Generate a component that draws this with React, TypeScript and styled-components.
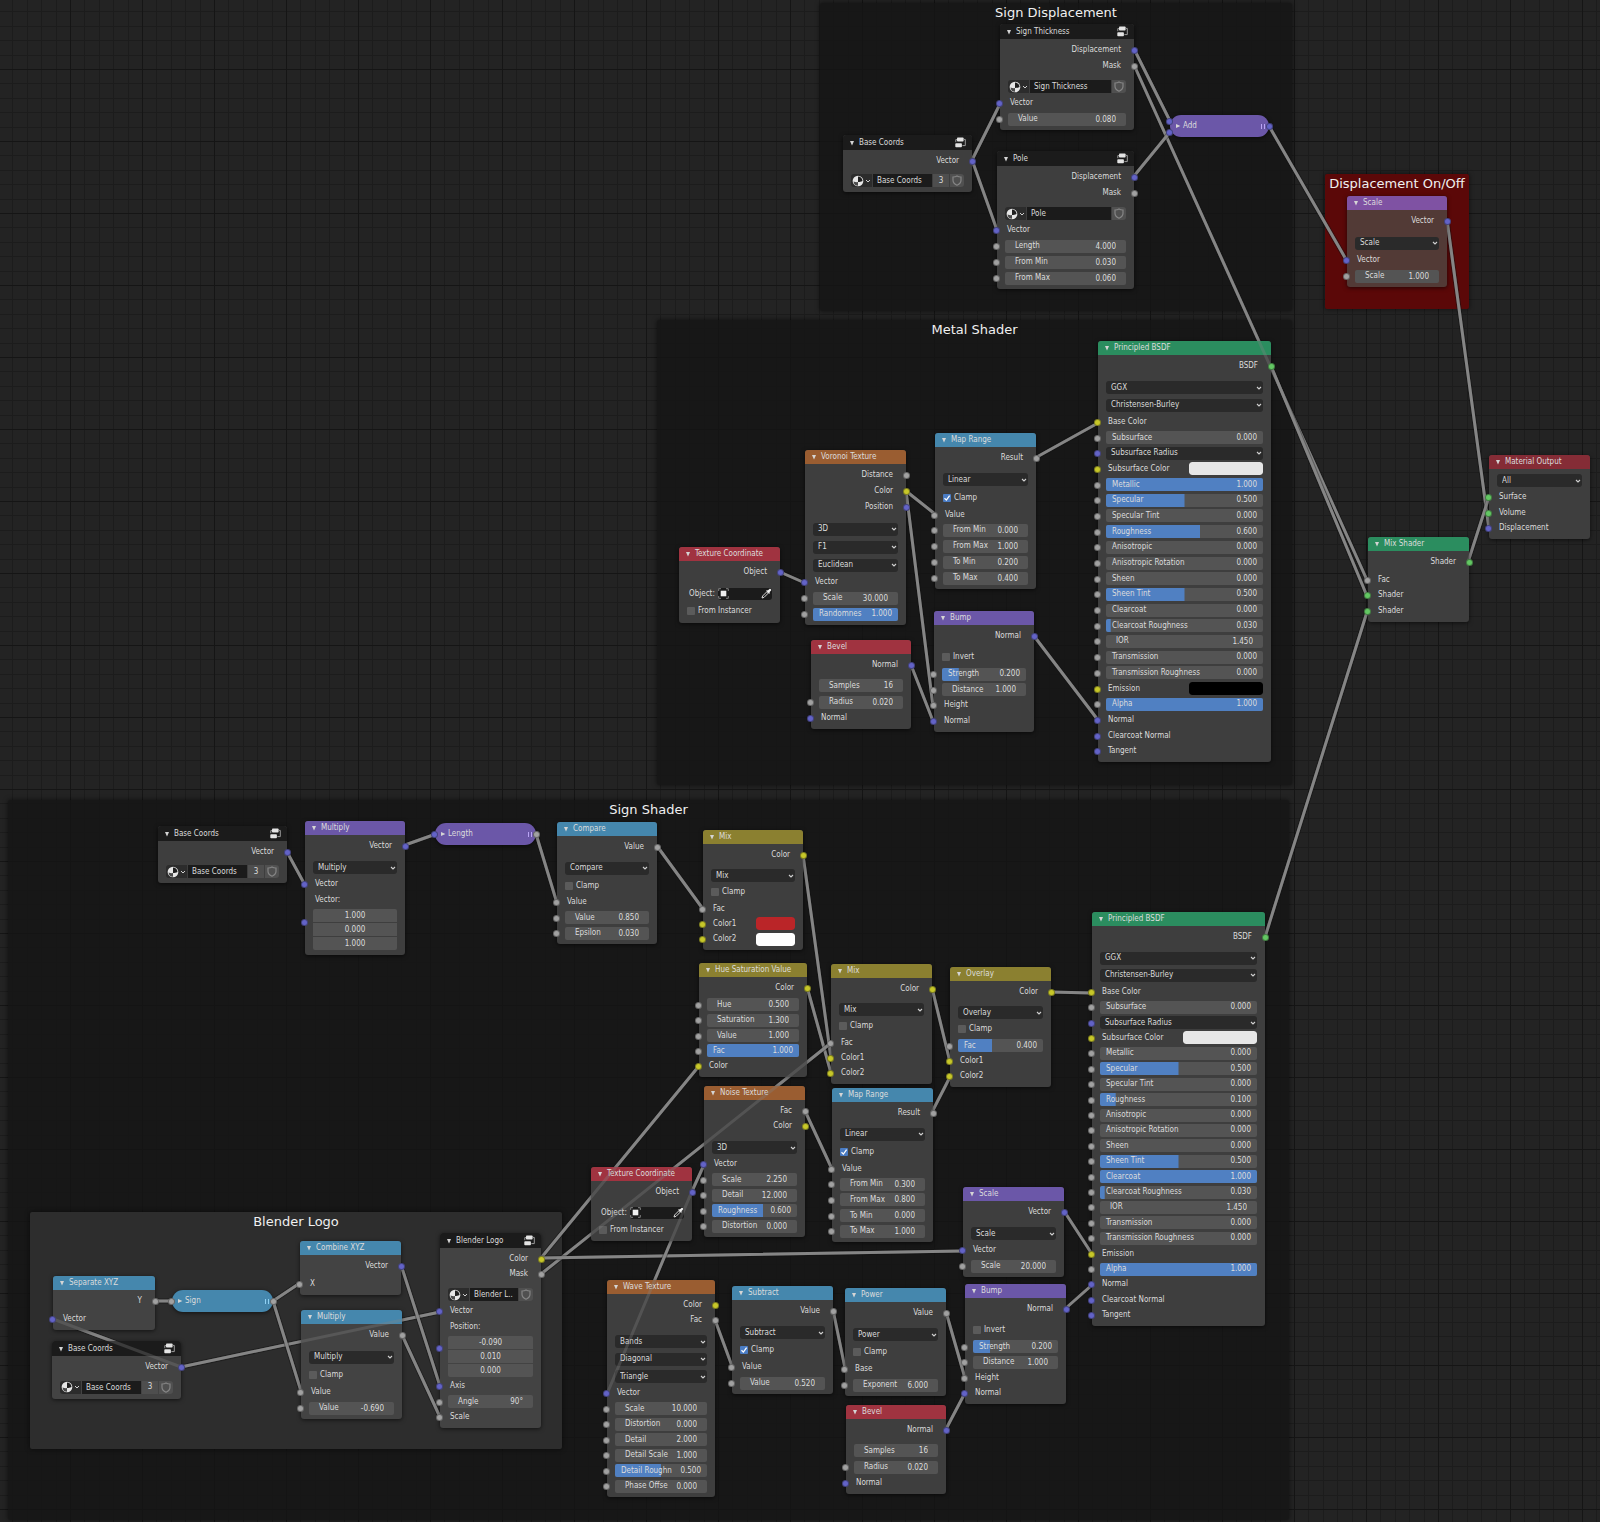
import React from 'react';
import styled, { createGlobalStyle, css } from 'styled-components';

/* ---------- theme ---------- */

const socketColor = {
  vector: '#6363c7',
  value: '#a1a1a1',
  color: '#c7c729',
  shader: '#63c763',
};

const headerColor = {
  group: '#1b1b1b',
  vector: '#6b57a8',
  vectorHot: '#7f52a3',
  shader: '#2b8d5f',
  converter: '#4587ad',
  texture: '#9a5d31',
  input: '#a03340',
  output: '#852c36',
  color: '#8b8030',
};

type SocketKind = keyof typeof socketColor;
type HeaderKind = keyof typeof headerColor;

const GlobalStyle = createGlobalStyle`
  *, *::before, *::after { box-sizing: border-box; }
  body {
    margin: 0;
    background: #232323;
    color: #dcdcdc;
    font-family: "DejaVu Sans Condensed", "DejaVu Sans", sans-serif;
    font-size: 8px;
    line-height: 12px;
  }
  button, input, select {
    margin: 0;
    padding: 0;
    border: 0;
    background: none;
    color: inherit;
    font: inherit;
    outline-offset: -1px;
  }
`;

/* ---------- canvas ---------- */

const Canvas = styled.main`
  position: relative;
  min-height: 100vh;
  overflow: hidden;
  background: #232323;
`;

const Layer = styled.svg<{ $above?: boolean }>`
  position: absolute;
  inset: 0;
  width: 100%;
  height: 100%;
  pointer-events: none;
  ${p => p.$above && css`
    z-index: 2;
    opacity: 0.3;
  `}
`;

const Frame = styled.section<{ $x: number; $y: number; $w: number; $h: number; $tone: 'dark' | 'red' | 'grey' }>`
  position: absolute;
  left: ${p => p.$x}px;
  top: ${p => p.$y}px;
  width: ${p => p.$w}px;
  height: ${p => p.$h}px;
  border-radius: 2px;
  background: ${p => ({ dark: 'rgba(21, 21, 21, 0.82)', red: '#5b0808', grey: '#2d2d2d' })[p.$tone]};
  box-shadow: 0 0 5px rgba(0, 0, 0, 0.6);
`;

const FrameTitle = styled.h2`
  margin: 0;
  color: #f0f0f0;
  font-family: "DejaVu Sans", sans-serif;
  font-size: 13px;
  font-weight: 400;
  line-height: 20px;
  text-align: center;
  white-space: nowrap;
`;

/* ---------- node shell ---------- */

const NodeBox = styled.article<{ $x: number; $y: number; $w: number; $h: number; $tone: 'plain' | 'light' | 'red' }>`
  position: absolute;
  left: ${p => p.$x}px;
  top: ${p => p.$y}px;
  width: ${p => p.$w}px;
  height: ${p => p.$h}px;
  display: flex;
  flex-direction: column;
  border-radius: 3px;
  background: ${p => ({ plain: '#3e3e3e', light: '#434343', red: '#523a36' })[p.$tone]};
  box-shadow: 0 1px 4px rgba(0, 0, 0, 0.6);
`;

const Header = styled.header<{ $kind: HeaderKind }>`
  flex: none;
  display: flex;
  align-items: center;
  gap: 3px;
  height: ${p => (p.$kind === 'group' ? 15 : 14)}px;
  padding: 0 6px 0 5px;
  border-radius: 3px 3px 0 0;
  background: ${p => headerColor[p.$kind]};
`;

const Toggle = styled.button`
  display: flex;
  align-items: center;
  justify-content: center;
  width: 8px;
  height: 12px;
`;

const NodeTitle = styled.h3`
  flex: 1;
  margin: 0;
  font-size: 8px;
  font-weight: 400;
  line-height: 12px;
  white-space: nowrap;
`;

const Body = styled.div`
  flex: 1;
  min-height: 0;
  display: flex;
  flex-direction: column;
  padding: 3px 0;
`;

const Row = styled.div<{ $size: number; $end?: boolean }>`
  flex: 1 1 ${p => p.$size}px;
  min-height: 0;
  position: relative;
  display: flex;
  align-items: center;
  justify-content: ${p => (p.$end ? 'flex-end' : 'flex-start')};
  padding: 0 8px;
  white-space: nowrap;
`;

const Gap = styled.div<{ $size: number }>`
  flex: none;
  height: ${p => p.$size}px;
`;

const PortLabel = styled.span<{ $out?: boolean }>`
  padding: ${p => (p.$out ? '0 5px 0 0' : '0 0 0 2px')};
`;

const Socket = styled.i<{ $kind: SocketKind; $right?: boolean }>`
  position: absolute;
  z-index: 3;
  top: calc(50% - 3px);
  ${p => (p.$right ? 'right: -4px;' : 'left: -4px;')}
  width: 7px;
  height: 7px;
  border: 1px solid rgba(20, 20, 20, 0.4);
  border-radius: 50%;
  background: ${p => socketColor[p.$kind]};
`;

/* ---------- controls ---------- */

const NumberBox = styled.label`
  flex: 1;
  display: flex;
  align-items: center;
  justify-content: space-between;
  height: 13px;
  padding: 0 10px;
  border-radius: 2px;
  background: #545454;
`;

const NumberInput = styled.input`
  flex: 1;
  min-width: 0;
  width: 0;
  height: 13px;
  text-align: right;
`;

const SliderBox = styled.label`
  flex: 1;
  display: grid;
  grid-template-columns: 1fr auto;
  align-items: center;
  height: 13px;
  overflow: hidden;
  border-radius: 2px;
  background: #545454;
`;

const SliderInput = styled.input`
  grid-area: 1 / 1 / 2 / 3;
  width: 100%;
  height: 13px;
  appearance: none;
  background: linear-gradient(#5080c2, #5080c2) no-repeat left / var(--fill) 100%;
  &::-webkit-slider-thumb { appearance: none; width: 1px; height: 13px; }
`;

const SliderName = styled.span`
  grid-area: 1 / 1 / 2 / 2;
  padding-left: 6px;
  pointer-events: none;
`;

const SliderValue = styled.output`
  grid-area: 1 / 2 / 2 / 3;
  padding-right: 6px;
  pointer-events: none;
`;

const SelectBox = styled.div`
  flex: 1;
  display: grid;
  align-items: center;
  height: 13px;
  border-radius: 3px;
  background: #2a2a2a;
`;

const Select = styled.select`
  grid-area: 1 / 1;
  width: 100%;
  height: 13px;
  padding: 0 12px 0 5px;
  appearance: none;
`;

const SelectArrow = styled.svg`
  grid-area: 1 / 1;
  justify-self: end;
  width: 6px;
  height: 4px;
  margin-right: 1px;
  pointer-events: none;
`;

const CheckLabel = styled.label`
  display: flex;
  align-items: center;
  gap: 3px;
`;

const CheckWrap = styled.span`
  display: grid;
`;

const CheckInput = styled.input`
  grid-area: 1 / 1;
  width: 8px;
  height: 8px;
  appearance: none;
  border-radius: 1px;
  background: #5b5b5b;
  &:checked { background: #4a7cc4; }
`;

const CheckMark = styled.svg`
  grid-area: 1 / 1;
  width: 8px;
  height: 8px;
  pointer-events: none;
`;

const SwatchLabel = styled.label`
  flex: 1;
  display: flex;
  align-items: center;
  justify-content: space-between;
  padding-left: 2px;
`;

const SwatchInput = styled.input`
  width: 48%;
  height: 13px;
  appearance: none;
  overflow: hidden;
  border-radius: 3px;
  &::-webkit-color-swatch-wrapper { padding: 0; }
  &::-webkit-color-swatch { border: 0; border-radius: 3px; }
`;

const VectorGroup = styled.div`
  flex: 1 1 60px;
  min-height: 0;
  position: relative;
  display: flex;
  flex-direction: column;
`;

const VectorStack = styled.div`
  flex: 1;
  display: flex;
  flex-direction: column;
  gap: 1px;
`;

const VectorInput = styled.input`
  width: 100%;
  height: 13px;
  background: #545454;
  text-align: center;
  &:first-child { border-radius: 2px 2px 0 0; }
  &:last-child { border-radius: 0 0 2px 2px; }
`;

const DataBlock = styled.div`
  flex: 1;
  display: flex;
  gap: 1px;
  height: 13px;
  overflow: hidden;
  border-radius: 3px;
`;

const BrowseButton = styled.button`
  display: flex;
  align-items: center;
  gap: 1px;
  width: 21px;
  padding: 0 1px;
  background: #2c2c2c;
`;

const NameInput = styled.input`
  flex: 1;
  min-width: 0;
  height: 13px;
  padding: 0 4px;
  background: #1b1b1b;
`;

const UsersButton = styled.button`
  width: 16px;
  height: 13px;
  background: #4e4e4e;
  text-align: center;
`;

const ShieldButton = styled.button`
  display: flex;
  align-items: center;
  justify-content: center;
  width: 14px;
  background: #505050;
`;

const ObjectLabel = styled.span`
  width: 31px;
  padding-left: 2px;
`;

const ObjectField = styled.div`
  flex: 1;
  display: flex;
  align-items: center;
  justify-content: space-between;
  height: 12px;
  border-radius: 3px;
  background: #1b1b1b;
`;

const IconButton = styled.button`
  display: flex;
  align-items: center;
`;

/* ---------- collapsed node ---------- */

const Pill = styled.article<{ $x: number; $y: number; $w: number; $kind: HeaderKind }>`
  position: absolute;
  left: ${p => p.$x}px;
  top: ${p => p.$y}px;
  width: ${p => p.$w}px;
  height: 22px;
  display: flex;
  align-items: center;
  gap: 1px;
  padding: 0 4px;
  border-radius: 11px;
  background: ${p => headerColor[p.$kind]};
  box-shadow: 0 1px 4px rgba(0, 0, 0, 0.6);
`;

const PillPorts = styled.div<{ $right?: boolean }>`
  position: absolute;
  ${p => (p.$right ? 'right: 0;' : 'left: 0;')}
  top: 0;
  width: 0;
  height: 100%;
  display: flex;
  flex-direction: column;
  justify-content: center;
`;

const PillPort = styled.div`
  position: relative;
  height: 11px;
`;

const Grip = styled.span<{ $kind: HeaderKind }>`
  width: 4px;
  height: 5px;
  border: solid ${p => (p.$kind === 'converter' ? '#8fd0f2' : '#b9a4f4')};
  border-width: 0 1px;
`;

/* ---------- icons ---------- */

const DownTriangle = () => (
  <svg width="6" height="6" viewBox="0 0 6 6"><path d="M1 1h4L3 5.4z" fill="#d5d5d5" /></svg>
);

const RightTriangle = () => (
  <svg width="6" height="6" viewBox="0 0 6 6"><path d="M1 1l4.4 2L1 5z" fill="#d5d5d5" /></svg>
);

const Chevron = () => (
  <SelectArrow viewBox="0 0 6 4" aria-hidden="true">
    <path d="M1 1l2 2 2-2" fill="none" stroke="#d0d0d0" strokeWidth="1.1" />
  </SelectArrow>
);

const GroupIcon = () => (
  <svg width="11" height="11" viewBox="0 0 11 11" aria-hidden="true">
    <rect x="2" y="0.5" width="6.6" height="4" rx="0.8" fill="#e4e4e4" />
    <rect x="0.3" y="6.3" width="6.6" height="4" rx="0.8" fill="#e4e4e4" />
    <path d="M8.8 2.4h1.500v6.200H7.400M2 2.6H0.8v2.6" fill="none" stroke="#a8a8a8" strokeWidth="0.9" />
  </svg>
);

const SphereIcon = () => (
  <svg width="12" height="12" viewBox="0 0 11 11" aria-hidden="true">
    <circle cx="5.5" cy="5.5" r="4.9" fill="#e6e6e6" />
    <path d="M5.5 1.400a4.100 4.100 0 0 1 4.100 4.100c-1.300.7-2.700.9-4.100.9z" fill="#1e1e1e" />
    <path d="M1.400 5.900c1.300.6 2.700.7 4.100.6v3.400A4.400 4.400 0 0 1 1.400 5.900z" fill="#4a4a4a" />
  </svg>
);

const SmallChevron = () => (
  <svg width="6" height="4" viewBox="0 0 6 4" aria-hidden="true">
    <path d="M1 1l2 2 2-2" fill="none" stroke="#d0d0d0" strokeWidth="1" />
  </svg>
);

const ShieldIcon = () => (
  <svg width="10" height="11" viewBox="0 0 10 11" aria-hidden="true">
    <path d="M5 1c1.300.8 2.600 1 4 1v3.200C9 7.600 7.200 9.200 5 10.200 2.800 9.200 1 7.600 1 5.200V2c1.400 0 2.700-.2 4-1z" fill="none" stroke="#858585" strokeWidth="1.2" />
  </svg>
);

const ObjectIcon = () => (
  <svg width="11" height="11" viewBox="0 0 11 11" aria-hidden="true">
    <rect x="2.700" y="2.700" width="5.600" height="5.600" fill="#f0f0f0" />
    <path d="M0.700 3V.7H3M8 .7h2.300V3M10.300 8v2.300H8M3 10.300H.7V8" fill="none" stroke="#8c8c8c" strokeWidth="0.9" />
  </svg>
);

const DropperIcon = () => (
  <svg width="11" height="11" viewBox="0 0 11 11" aria-hidden="true">
    <path d="M1 10l.6-2L6 3.600 7.400 5 3 9.400z" fill="none" stroke="#d8d8d8" strokeWidth="1" />
    <path d="M5.200 2.800l3 3 .8-.8-.6-.7 1.700-1.800c.7-.8-.7-2.300-1.600-1.600L6.700 2.600 6 2z" fill="#f0f0f0" />
  </svg>
);

/* ---------- row model ---------- */

type RowSpec =
  | { t: 'out'; k: SocketKind; n: string }
  | { t: 'in'; k: SocketKind; n: string }
  | { t: 'num'; k?: SocketKind; n: string; v: string; tall?: boolean }
  | { t: 'slide'; k: SocketKind; n: string; v: string }
  | { t: 'sel'; n: string; k?: SocketKind }
  | { t: 'check'; n: string; on?: boolean; size?: number }
  | { t: 'swatch'; k: SocketKind; n: string; c: string }
  | { t: 'vec'; n: string; v: string[] }
  | { t: 'id'; n: string; users?: string }
  | { t: 'object' }
  | { t: 'gap'; h: number };

const out = (k: SocketKind, n: string): RowSpec => ({ t: 'out', k, n });
const inp = (k: SocketKind, n: string): RowSpec => ({ t: 'in', k, n });
const num = (n: string, v: string): RowSpec => ({ t: 'num', k: 'value', n, v });
const slide = (n: string, v: string): RowSpec => ({ t: 'slide', k: 'value', n, v });
const sel = (n: string): RowSpec => ({ t: 'sel', n });
const check = (n: string, on = false, size = 18): RowSpec => ({ t: 'check', n, on, size });
const gap = (h: number): RowSpec => ({ t: 'gap', h });

function NodeRow({ row }: { row: RowSpec }) {
  switch (row.t) {
    case 'gap':
      return <Gap $size={row.h} />;
    case 'out':
      return (
        <Row $size={16} $end>
          <PortLabel $out>{row.n}</PortLabel>
          <Socket $kind={row.k} $right />
        </Row>
      );
    case 'in':
      return (
        <Row $size={16}>
          <Socket $kind={row.k} />
          <PortLabel>{row.n}</PortLabel>
        </Row>
      );
    case 'num':
      return (
        <Row $size={row.tall ? 18 : 16}>
          {row.k && <Socket $kind={row.k} />}
          <NumberBox>
            {row.n}
            <NumberInput defaultValue={row.v} />
          </NumberBox>
        </Row>
      );
    case 'slide':
      return (
        <Row $size={16}>
          <Socket $kind={row.k} />
          <SliderBox>
            <SliderInput
              type="range"
              min="0"
              max="1"
              step="0.001"
              defaultValue={row.v}
              style={{ '--fill': `${Number(row.v) * 100}%` } as React.CSSProperties}
            />
            <SliderName>{row.n}</SliderName>
            <SliderValue>{row.v}</SliderValue>
          </SliderBox>
        </Row>
      );
    case 'sel':
      return (
        <Row $size={row.k ? 16 : 18}>
          {row.k && <Socket $kind={row.k} />}
          <SelectBox>
            <Select aria-label={row.n}>
              <option>{row.n}</option>
            </Select>
            <Chevron />
          </SelectBox>
        </Row>
      );
    case 'check':
      return (
        <Row $size={row.size ?? 18}>
          <CheckLabel>
            <CheckWrap>
              <CheckInput type="checkbox" defaultChecked={row.on} />
              {row.on && (
                <CheckMark viewBox="0 0 8 8" aria-hidden="true">
                  <path d="M1.500 4.200l1.900 1.900 3.200-4.400" fill="none" stroke="#fff" strokeWidth="1.300" />
                </CheckMark>
              )}
            </CheckWrap>
            {row.n}
          </CheckLabel>
        </Row>
      );
    case 'swatch':
      return (
        <Row $size={16}>
          <Socket $kind={row.k} />
          <SwatchLabel>
            {row.n}
            <SwatchInput type="color" defaultValue={row.c} />
          </SwatchLabel>
        </Row>
      );
    case 'vec':
      return (
        <>
          <VectorGroup>
            <Socket $kind="vector" />
            <Row $size={16}>
              <PortLabel>{row.n}:</PortLabel>
            </Row>
            <Row $size={43}>
              <VectorStack>
                {row.v.map((v, i) => (
                  <VectorInput key={i} defaultValue={v} aria-label={`${row.n} ${'XYZ'[i]}`} />
                ))}
              </VectorStack>
            </Row>
          </VectorGroup>
          <Gap $size={1} />
        </>
      );
    case 'id':
      return (
        <Row $size={18}>
          <DataBlock>
            <BrowseButton aria-label="Browse node groups">
              <SphereIcon />
              <SmallChevron />
            </BrowseButton>
            <NameInput defaultValue={row.n} aria-label="Node group name" />
            {row.users && <UsersButton>{row.users}</UsersButton>}
            <ShieldButton aria-label="Fake user">
              <ShieldIcon />
            </ShieldButton>
          </DataBlock>
        </Row>
      );
    case 'object':
      return (
        <Row $size={18}>
          <ObjectLabel>Object:</ObjectLabel>
          <ObjectField>
            <IconButton aria-label="Choose object"><ObjectIcon /></IconButton>
            <IconButton aria-label="Pick object"><DropperIcon /></IconButton>
          </ObjectField>
        </Row>
      );
  }
}

interface NodeSpec {
  title: string;
  kind: HeaderKind;
  x: number;
  y: number;
  w: number;
  h: number;
  tone?: 'plain' | 'light' | 'red';
  rows: RowSpec[];
}

function GraphNode({ node }: { node: NodeSpec }) {
  return (
    <NodeBox $x={node.x} $y={node.y} $w={node.w} $h={node.h} $tone={node.tone ?? 'plain'}>
      <Header $kind={node.kind}>
        <Toggle aria-label={`Collapse ${node.title}`}><DownTriangle /></Toggle>
        <NodeTitle>{node.title}</NodeTitle>
        {node.kind === 'group' && <GroupIcon />}
      </Header>
      <Body>
        {node.rows.map((row, i) => <NodeRow key={i} row={row} />)}
      </Body>
    </NodeBox>
  );
}

interface PillSpec {
  title: string;
  kind: HeaderKind;
  x: number;
  y: number;
  w: number;
  left: SocketKind[];
  right: SocketKind[];
}

function CollapsedNode({ node }: { node: PillSpec }) {
  return (
    <Pill $x={node.x} $y={node.y} $w={node.w} $kind={node.kind}>
      <PillPorts>
        {node.left.map((k, i) => <PillPort key={i}><Socket $kind={k} /></PillPort>)}
      </PillPorts>
      <Toggle aria-label={`Expand ${node.title}`}><RightTriangle /></Toggle>
      <NodeTitle>{node.title}</NodeTitle>
      <Grip $kind={node.kind} />
      <PillPorts $right>
        {node.right.map((k, i) => <PillPort key={i}><Socket $kind={k} $right /></PillPort>)}
      </PillPorts>
    </Pill>
  );
}

/* ---------- graph data ---------- */

const principled = (metallic: string, roughness: string, clearcoat: string, emission: RowSpec): RowSpec[] => [
  out('shader', 'BSDF'), gap(5), sel('GGX'), sel('Christensen-Burley'),
  inp('color', 'Base Color'),
  slide('Subsurface', '0.000'),
  { t: 'sel', n: 'Subsurface Radius', k: 'vector' },
  { t: 'swatch', k: 'color', n: 'Subsurface Color', c: '#e7e7e7' },
  slide('Metallic', metallic), slide('Specular', '0.500'), slide('Specular Tint', '0.000'),
  slide('Roughness', roughness), slide('Anisotropic', '0.000'), slide('Anisotropic Rotation', '0.000'),
  slide('Sheen', '0.000'), slide('Sheen Tint', '0.500'), slide('Clearcoat', clearcoat),
  slide('Clearcoat Roughness', '0.030'), num('IOR', '1.450'), slide('Transmission', '0.000'),
  slide('Transmission Roughness', '0.000'), emission, slide('Alpha', '1.000'),
  inp('vector', 'Normal'), inp('vector', 'Clearcoat Normal'), inp('vector', 'Tangent'),
];

const baseCoords: RowSpec[] = [out('vector', 'Vector'), gap(4), { t: 'id', n: 'Base Coords', users: '3' }];

const textureCoordinate: RowSpec[] = [out('vector', 'Object'), gap(5), { t: 'object' }, check('From Instancer')];

const bevel: RowSpec[] = [
  out('vector', 'Normal'), gap(4), { t: 'num', n: 'Samples', v: '16', tall: true },
  num('Radius', '0.020'), inp('vector', 'Normal'),
];

const bump: RowSpec[] = [
  out('vector', 'Normal'), gap(5), check('Invert'), slide('Strength', '0.200'),
  num('Distance', '1.000'), inp('value', 'Height'), inp('vector', 'Normal'),
];

const mapRange = (v: string[]): RowSpec[] => [
  out('value', 'Result'), gap(5), sel('Linear'), check('Clamp', true), inp('value', 'Value'),
  num('From Min', v[0]), num('From Max', v[1]), num('To Min', v[2]), num('To Max', v[3]),
];

const scale = (v: string): RowSpec[] => [
  out('vector', 'Vector'), gap(5), sel('Scale'), inp('vector', 'Vector'), num('Scale', v),
];

const nodes: NodeSpec[] = [
  { title: 'Sign Thickness', kind: 'group', x: 1000, y: 24, w: 134, h: 106, rows: [
    out('vector', 'Displacement'), out('value', 'Mask'), gap(4), { t: 'id', n: 'Sign Thickness' },
    inp('vector', 'Vector'), num('Value', '0.080'),
  ] },
  { title: 'Pole', kind: 'group', x: 997, y: 151, w: 137, h: 138, rows: [
    out('vector', 'Displacement'), out('value', 'Mask'), gap(4), { t: 'id', n: 'Pole' },
    inp('vector', 'Vector'), num('Length', '4.000'), num('From Min', '0.030'), num('From Max', '0.060'),
  ] },
  { title: 'Base Coords', kind: 'group', x: 843, y: 135, w: 129, h: 57, rows: baseCoords },
  { title: 'Scale', kind: 'vectorHot', x: 1347, y: 196, w: 100, h: 91, tone: 'red', rows: scale('1.000') },
  { title: 'Material Output', kind: 'output', x: 1489, y: 455, w: 101, h: 84, rows: [
    sel('All'), inp('shader', 'Surface'), inp('shader', 'Volume'), inp('vector', 'Displacement'),
  ] },
  { title: 'Mix Shader', kind: 'shader', x: 1368, y: 537, w: 101, h: 85, rows: [
    out('shader', 'Shader'), gap(2), inp('value', 'Fac'), inp('shader', 'Shader'), inp('shader', 'Shader'),
  ] },

  { title: 'Texture Coordinate', kind: 'input', x: 679, y: 547, w: 101, h: 76, rows: textureCoordinate },
  { title: 'Voronoi Texture', kind: 'texture', x: 805, y: 450, w: 101, h: 175, rows: [
    out('value', 'Distance'), out('color', 'Color'), out('vector', 'Position'), gap(5),
    sel('3D'), sel('F1'), sel('Euclidean'), inp('vector', 'Vector'),
    num('Scale', '30.000'), slide('Randomnes', '1.000'),
  ] },
  { title: 'Bevel', kind: 'input', x: 811, y: 640, w: 100, h: 89, rows: bevel },
  { title: 'Map Range', kind: 'converter', x: 935, y: 433, w: 101, h: 156, rows: mapRange(['0.000', '1.000', '0.200', '0.400']) },
  { title: 'Bump', kind: 'vector', x: 934, y: 611, w: 100, h: 121, rows: bump },
  { title: 'Principled BSDF', kind: 'shader', x: 1098, y: 341, w: 173, h: 421,
    rows: principled('1.000', '0.600', '0.000', { t: 'swatch', k: 'color', n: 'Emission', c: '#000000' }) },

  { title: 'Base Coords', kind: 'group', x: 158, y: 826, w: 129, h: 57, rows: baseCoords },
  { title: 'Multiply', kind: 'vector', x: 305, y: 821, w: 100, h: 134, rows: [
    out('vector', 'Vector'), gap(5), sel('Multiply'), inp('vector', 'Vector'),
    { t: 'vec', n: 'Vector', v: ['1.000', '0.000', '1.000'] },
  ] },
  { title: 'Compare', kind: 'converter', x: 557, y: 822, w: 100, h: 122, rows: [
    out('value', 'Value'), gap(5), sel('Compare'), check('Clamp'), inp('value', 'Value'),
    num('Value', '0.850'), num('Epsilon', '0.030'),
  ] },
  { title: 'Mix', kind: 'color', x: 703, y: 830, w: 100, h: 120, rows: [
    out('color', 'Color'), gap(5), sel('Mix'), check('Clamp', false, 16), gap(1), inp('value', 'Fac'),
    { t: 'swatch', k: 'color', n: 'Color1', c: '#ba2528' },
    { t: 'swatch', k: 'color', n: 'Color2', c: '#ffffff' },
  ] },
  { title: 'Hue Saturation Value', kind: 'color', x: 699, y: 963, w: 108, h: 114, rows: [
    out('color', 'Color'), gap(2), num('Hue', '0.500'), num('Saturation', '1.300'),
    num('Value', '1.000'), slide('Fac', '1.000'), inp('color', 'Color'),
  ] },
  { title: 'Mix', kind: 'color', x: 831, y: 964, w: 101, h: 120, rows: [
    out('color', 'Color'), gap(5), sel('Mix'), check('Clamp', false, 16), gap(1),
    inp('value', 'Fac'), inp('color', 'Color1'), inp('color', 'Color2'),
  ] },
  { title: 'Overlay', kind: 'color', x: 950, y: 967, w: 101, h: 120, rows: [
    out('color', 'Color'), gap(5), sel('Overlay'), check('Clamp', false, 16), gap(1),
    slide('Fac', '0.400'), inp('color', 'Color1'), inp('color', 'Color2'),
  ] },
  { title: 'Texture Coordinate', kind: 'input', x: 591, y: 1167, w: 101, h: 74, rows: textureCoordinate },
  { title: 'Noise Texture', kind: 'texture', x: 704, y: 1086, w: 101, h: 151, rows: [
    out('value', 'Fac'), out('color', 'Color'), gap(5), sel('3D'), inp('vector', 'Vector'),
    num('Scale', '2.250'), num('Detail', '12.000'), slide('Roughness', '0.600'), num('Distortion', '0.000'),
  ] },
  { title: 'Map Range', kind: 'converter', x: 832, y: 1088, w: 101, h: 154, rows: mapRange(['0.300', '0.800', '0.000', '1.000']) },
  { title: 'Scale', kind: 'vector', x: 963, y: 1187, w: 101, h: 90, rows: scale('20.000') },
  { title: 'Bump', kind: 'vector', x: 965, y: 1284, w: 101, h: 120, rows: bump },
  { title: 'Wave Texture', kind: 'texture', x: 607, y: 1280, w: 108, h: 217, rows: [
    out('color', 'Color'), out('value', 'Fac'), gap(5), sel('Bands'), sel('Diagonal'), sel('Triangle'),
    inp('vector', 'Vector'), num('Scale', '10.000'), num('Distortion', '0.000'), num('Detail', '2.000'),
    num('Detail Scale', '1.000'), slide('Detail Roughn', '0.500'), num('Phase Offse', '0.000'),
  ] },
  { title: 'Subtract', kind: 'converter', x: 732, y: 1286, w: 101, h: 108, rows: [
    out('value', 'Value'), gap(5), sel('Subtract'), check('Clamp', true), inp('value', 'Value'), num('Value', '0.520'),
  ] },
  { title: 'Power', kind: 'converter', x: 845, y: 1288, w: 101, h: 108, rows: [
    out('value', 'Value'), gap(5), sel('Power'), check('Clamp'), inp('value', 'Base'), num('Exponent', '6.000'),
  ] },
  { title: 'Bevel', kind: 'input', x: 846, y: 1405, w: 100, h: 89, rows: bevel },
  { title: 'Principled BSDF', kind: 'shader', x: 1092, y: 912, w: 173, h: 414,
    rows: principled('0.000', '0.100', '1.000', inp('color', 'Emission')) },

  { title: 'Separate XYZ', kind: 'converter', x: 53, y: 1276, w: 102, h: 54, tone: 'light', rows: [
    out('value', 'Y'), gap(2), inp('vector', 'Vector'),
  ] },
  { title: 'Base Coords', kind: 'group', x: 52, y: 1341, w: 129, h: 58, tone: 'light', rows: baseCoords },
  { title: 'Combine XYZ', kind: 'converter', x: 300, y: 1241, w: 101, h: 54, tone: 'light', rows: [
    out('vector', 'Vector'), gap(2), inp('value', 'X'),
  ] },
  { title: 'Multiply', kind: 'converter', x: 301, y: 1310, w: 101, h: 109, tone: 'light', rows: [
    out('value', 'Value'), gap(5), sel('Multiply'), check('Clamp'), inp('value', 'Value'), num('Value', '-0.690'),
  ] },
  { title: 'Blender Logo', kind: 'group', x: 440, y: 1233, w: 101, h: 195, tone: 'light', rows: [
    out('color', 'Color'), out('value', 'Mask'), gap(4), { t: 'id', n: 'Blender L..' },
    inp('vector', 'Vector'), { t: 'vec', n: 'Position', v: ['-0.090', '0.010', '0.000'] },
    inp('vector', 'Axis'), num('Angle', '90°'), inp('value', 'Scale'),
  ] },
];

const pills: PillSpec[] = [
  { title: 'Add', kind: 'vector', x: 1170, y: 115, w: 99, left: ['vector', 'vector'], right: ['vector'] },
  { title: 'Length', kind: 'vector', x: 435, y: 823, w: 101, left: ['vector'], right: ['value'] },
  { title: 'Sign', kind: 'converter', x: 172, y: 1290, w: 101, left: ['value'], right: ['value'] },
];

/* Each link is [x1, y1, x2, y2] in canvas coordinates. */
const links: [number, number, number, number][] = [
  [972, 160, 1000, 104], [972, 160, 997, 230],
  [1134, 49, 1170, 121], [1134, 65, 1367, 580], [1134, 176, 1170, 132],
  [1269, 126, 1347, 261], [1447, 220, 1489, 529], [1468, 562, 1489, 497],
  [1271, 366, 1367, 596], [1265, 937, 1367, 612],
  [780, 572, 805, 583], [906, 491, 935, 514], [906, 491, 933, 706],
  [1035, 458, 1098, 423], [911, 665, 933, 721], [1034, 636, 1098, 720],
  [287, 852, 305, 885], [405, 845, 436, 834], [536, 834, 557, 903],
  [657, 846, 703, 909], [803, 855, 831, 1058], [807, 987, 831, 1073],
  [541, 1258, 699, 1066], [541, 1274, 831, 1043], [541, 1258, 963, 1251],
  [932, 988, 950, 1062], [932, 1112, 950, 1077], [1050, 992, 1092, 993],
  [805, 1111, 832, 1169], [692, 1191, 704, 1165], [692, 1191, 607, 1394],
  [715, 1320, 732, 1366], [833, 1310, 845, 1368], [946, 1312, 965, 1378],
  [946, 1429, 965, 1393], [1066, 1308, 1092, 1285], [1064, 1211, 1092, 1254],
  [155, 1301, 173, 1301], [181, 1367, 53, 1319], [181, 1367, 440, 1312],
  [273, 1301, 300, 1283], [273, 1301, 301, 1391], [401, 1265, 440, 1386], [402, 1335, 440, 1417],
];

const Links = ({ outlined }: { outlined?: boolean }) => (
  <g strokeLinecap="round">
    {links.map(([x1, y1, x2, y2], i) => (
      <g key={i}>
        {outlined && <line x1={x1} y1={y1} x2={x2} y2={y2} stroke="#111" strokeOpacity="0.5" strokeWidth="5" />}
        <line x1={x1} y1={y1} x2={x2} y2={y2} stroke="#858585" strokeWidth="3" />
      </g>
    ))}
  </g>
);

const minorLines = [14, 29, 43, 58];

export default function App() {
  return (
    <>
      <GlobalStyle />
      <Canvas>
        <Layer aria-hidden="true">
          <defs>
            <pattern id="grid" x="70" y="69" width="72" height="72" patternUnits="userSpaceOnUse">
              {minorLines.map(p => (
                <path key={p} d={`M${p} 0h1v72h-1zM0 ${p}h72v1h-72z`} fill="#1c1c1c" />
              ))}
              <path d="M0 0h1v72h-1zM0 0h72v1h-72z" fill="#151515" />
            </pattern>
          </defs>
          <rect width="100%" height="100%" fill="url(#grid)" />
        </Layer>

        <Frame $x={820} $y={3} $w={472} $h={308} $tone="dark"><FrameTitle>Sign Displacement</FrameTitle></Frame>
        <Frame $x={1325} $y={174} $w={144} $h={135} $tone="red"><FrameTitle>Displacement On/Off</FrameTitle></Frame>
        <Frame $x={657} $y={320} $w={635} $h={465} $tone="dark"><FrameTitle>Metal Shader</FrameTitle></Frame>
        <Frame $x={8} $y={800} $w={1281} $h={720} $tone="dark"><FrameTitle>Sign Shader</FrameTitle></Frame>
        <Frame $x={30} $y={1212} $w={532} $h={237} $tone="grey"><FrameTitle>Blender Logo</FrameTitle></Frame>

        <Layer aria-hidden="true"><Links outlined /></Layer>
        {nodes.map((node, i) => <GraphNode key={i} node={node} />)}
        {pills.map((node, i) => <CollapsedNode key={i} node={node} />)}
        <Layer $above aria-hidden="true"><Links /></Layer>
      </Canvas>
    </>
  );
}
